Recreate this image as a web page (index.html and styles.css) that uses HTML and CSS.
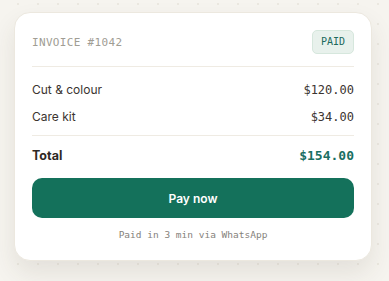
FILE: index.html
```html
<!DOCTYPE html>
<html lang="en">

<head>
    <meta charset="UTF-8">
    <title>Invoice</title>
    <link rel="stylesheet" href="styles.css">
</head>

<body>
    <div class="card">
        <div class="head">
            <span class="number">INVOICE #1042</span>
            <span class="badge">PAID</span>
        </div>
        <div class="lines">
            <div class="row">
                <span>Cut &amp; colour</span>
                <span class="amount">$120.00</span>
            </div>
            <div class="row">
                <span>Care kit</span>
                <span class="amount">$34.00</span>
            </div>
        </div>
        <div class="row total">
            <span>Total</span>
            <span class="amount">$154.00</span>
        </div>
        <button class="pay">Pay now</button>
        <p class="note">Paid in 3 min via WhatsApp</p>
    </div>
</body>

</html>
```

FILE: styles.css
```css
html,
body {
    margin: 0;
    padding: 0;
}

body {
    background-color: #f6f4ef;
    background-image: radial-gradient(circle, #ebe8e0 1px, transparent 1.5px);
    background-size: 20px 20px;
    background-position: 8px -6px;
    padding: 12px 17px 0 14px;
    height: 281px;
    box-sizing: border-box;
    font-family: Inter, "Noto Sans", sans-serif;
}

.card {
    background: #fff;
    border: 1px solid #ece8df;
    border-radius: 16px;
    padding: 17px 17px 18px;
    box-shadow: 0 12px 24px rgba(70, 60, 40, 0.1);
}

.head {
    display: flex;
    justify-content: space-between;
    align-items: center;
    padding-bottom: 12px;
    border-bottom: 1px solid #efebe3;
}

.number {
    font-family: "DejaVu Sans Mono", monospace;
    font-size: 11px;
    letter-spacing: 0.03em;
    color: #a09d94;
}

.badge {
    font-family: "DejaVu Sans Mono", monospace;
    font-size: 10px;
    color: #1c6a5c;
    background: #e8f1ec;
    border: 1px solid #d6e7dd;
    border-radius: 5px;
    height: 22px;
    line-height: 22px;
    padding: 0 8px;
}

.lines {
    padding: 9px 0 5px;
    border-bottom: 1px solid #efebe3;
}

.row {
    display: flex;
    justify-content: space-between;
    align-items: center;
    height: 27px;
    font-size: 12px;
    color: #3b3430;
}

.amount {
    font-family: "DejaVu Sans Mono", monospace;
    font-size: 12px;
    color: #3b3430;
}

.total {
    height: 36px;
    margin-top: 1px;
    font-size: 12.5px;
    font-weight: bold;
    color: #2e2824;
}

.total .amount {
    font-weight: bold;
    font-size: 13px;
    color: #1a6f62;
}

.pay {
    display: block;
    width: 100%;
    height: 40px;
    margin-top: 5px;
    border: 0;
    border-radius: 10px;
    background: #14715b;
    color: #fff;
    font-family: Inter, "Noto Sans", sans-serif;
    font-size: 12px;
    font-weight: 600;
}

.note {
    margin: 10px 0 0;
    text-align: center;
    font-family: "DejaVu Sans Mono", monospace;
    font-size: 9.5px;
    line-height: 14px;
    color: #85827b;
}
```
